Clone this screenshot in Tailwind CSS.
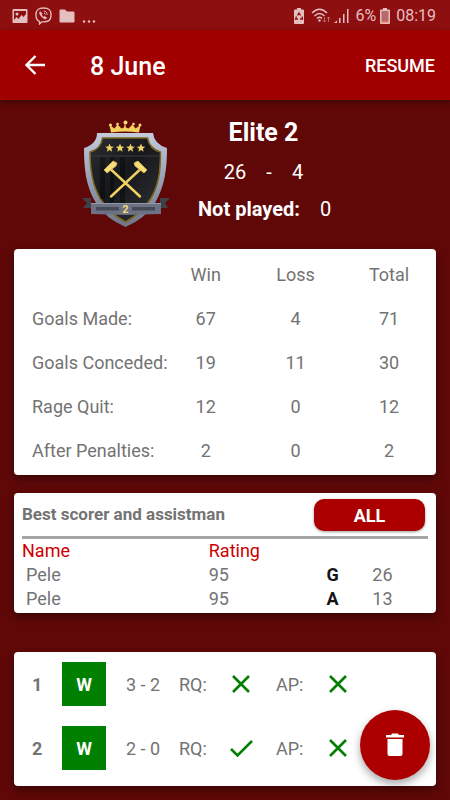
<!DOCTYPE html>
<html lang="en">
<head>
    <meta charset="UTF-8">
    <meta name="viewport" content="width=device-width, initial-scale=1.0">
    <title>8 June</title>
    <script src="https://cdn.jsdelivr.net/npm/@tailwindcss/browser@4"></script>
</head>
<body class="bg-[#600808] min-h-screen font-['Roboto','Liberation_Sans',sans-serif] text-lg leading-6 text-[#737373]">

    <!-- Status bar -->
    <div class="bg-[#8e0f10] h-[30px] pt-[2px] pl-3 pr-[14px] flex items-center justify-between text-[#e3bfc0]">
        <div class="flex items-center gap-[7px]">
            <svg class="w-4 h-4" viewBox="0 0 16 16" fill="currentColor"><path fill-rule="evenodd" d="M1.500 1h13q1 0 1 1v12q0 1-1 1h-13q-1 0-1-1V2q0-1 1-1zM2 3v9l2.500-3 2 2 3-4 2 2 2.500-3V3zM5 4.500a1.500 1.500 0 1 1 0 3 1.500 1.500 0 0 1 0-3z"/></svg>
            <svg class="w-[17px] h-[18px]" viewBox="0 0 17 18" fill="none" stroke="currentColor" stroke-width="1.300"><path d="M8.500 1C3 1 1 3 1 8c0 3.500 1 5.500 3.500 6.400V17l2.300-2.200C13.500 15.200 16 13.500 16 8c0-5-2-7-7.500-7z"/><path d="M5.200 4.500c-1.500 1-.5 3 1 4.800s3.500 3 4.500 2.800l1-1.300-2-1.500-1 .8c-1-.5-1.800-1.400-2.200-2.500l.8-.9z" fill="currentColor" stroke-width=".5"/><path d="M8.800 4c2 .2 3.300 1.500 3.400 3.800M9 6c.8.100 1.300.600 1.400 1.500" stroke-width="1"/></svg>
            <svg class="w-4 h-4" viewBox="0 0 16 16" fill="currentColor"><path d="M1.500 1.500H6L8 3.500h6.500q1 0 1 1v9q0 1-1 1h-13q-1 0-1-1v-11q0-1 1-1z"/></svg>
            <svg class="w-[14px] h-4" viewBox="0 0 14 16" fill="currentColor"><circle cx="2" cy="13.500" r="1.200"/><circle cx="7" cy="13.500" r="1.200"/><circle cx="12" cy="13.500" r="1.200"/></svg>
        </div>
        <div class="flex items-center text-base">
            <svg class="w-[10px] h-4 mr-[7px]" viewBox="0 0 10 16"><path d="M3 0h4v1.500h2q1 0 1 1V15q0 1-1 1H1q-1 0-1-1V2.500q0-1 1-1h2z" fill="currentColor"/><path d="M3.500 7.500L5 5l1.500 2.500M8 8.500L8.500 11H6M4 11H1.500L2.500 8.500" fill="none" stroke="#8e0f10" stroke-width="1.300"/></svg>
            <svg class="w-5 h-4 mr-[3px]" viewBox="0 0 20 16" fill="none" stroke="currentColor" stroke-width="1.500"><path d="M1 5q7.500-7.500 15 0M3.500 8q5-5 10 0M6 10.500q2.500-2.500 5 0"/><circle cx="8.500" cy="12.500" r="1.200" fill="currentColor" stroke="none"/><path d="M13.500 9v5M12 12.500l1.500 1.500 1.500-1.500M17.500 14V9M16 10.500L17.500 9 19 10.500" stroke-width="1" opacity=".5"/></svg>
            <svg class="w-[15px] h-4 mr-[6px]" viewBox="0 0 15 16" fill="currentColor"><path d="M0 15l3-2.500V15zM5 10h1.500v5H5zM9 6h1.500v9H9zM13 1h1.500v14H13z"/></svg>
            <span>6%</span>
            <svg class="w-[10px] h-4 ml-1 mr-[6px]" viewBox="0 0 10 16"><path d="M3 0h4v1.500h2q1 0 1 1V15q0 1-1 1H1q-1 0-1-1V2.500q0-1 1-1h2z" fill="currentColor"/><path d="M1.500 3h7v10h-7z" fill="#b9696a"/><path d="M1.500 13h7v1.500h-7z" fill="#ee6a50"/></svg>
            <span>08:19</span>
        </div>
    </div>

    <!-- App bar -->
    <header class="bg-[#a00000] h-[70px] pl-[23px] pr-[15px] flex items-center text-white shadow-[0_2px_6px_rgba(0,0,0,0.4)]">
        <button aria-label="Back">
            <svg class="w-6 h-6" viewBox="0 0 24 24" fill="none" stroke="currentColor" stroke-width="2.400"><path d="M22 12H4M12.500 3L3.500 12l9 9"/></svg>
        </button>
        <h1 class="ml-[43px] pt-[3px] text-[25px] leading-8 font-medium">8 June</h1>
        <button class="ml-auto pt-[2px] font-medium">RESUME</button>
    </header>

    <!-- Division summary -->
    <section class="px-[14px] pt-[17px] pb-[22px] flex text-white text-xl">
        <svg class="w-[90px] h-[110px] mt-[3px] -mb-[3px] ml-[66px] shrink-0" viewBox="0 0 90 110">
            <defs>
                <linearGradient id="steel" x1="0" y1="0" x2="0" y2="1">
                    <stop offset="0" stop-color="#c3cbdd"/>
                    <stop offset="1" stop-color="#6d7488"/>
                </linearGradient>
                <linearGradient id="dark" x1="0" y1="0" x2="1" y2="1">
                    <stop offset="0" stop-color="#2c2d32"/>
                    <stop offset="0.450" stop-color="#17181b"/>
                    <stop offset="1" stop-color="#303137"/>
                </linearGradient>
            </defs>
            <path d="M31 12.500L29.500 5l5 3.500 3-4 4 4 2.500-1 1-5 1 5 2.500 1 4-4 3 4 5-3.500-1.500 7.500q-14-2-28 0z" fill="#f3cf5e"/>
            <circle cx="45.500" cy="2.500" r="2" fill="#f7dc78"/><circle cx="30.500" cy="5" r="1.500" fill="#f7dc78"/><circle cx="60" cy="5" r="1.500" fill="#f7dc78"/><circle cx="37.500" cy="4" r="1.300" fill="#f7dc78"/><circle cx="53.500" cy="4" r="1.300" fill="#f7dc78"/>
            <path d="M2 78h9v10H3l4-5zM90 78H80v10h8l-3-5z" fill="#3f4048"/>
            <path d="M17 13h56q1 11 14 15c0 20-2 38-12 55q-9 15-29.500 24Q25 98 16 83C6 67 4 49 4 28q13-4 13-15z" fill="url(#steel)"/>
            <path d="M22.500 18h45q2 11 13 14c0 20-2 34-10 47-6 10-14 17-25 23-11-6-19-13-25-23C12.500 66 10 52 10 32q11-3 12.500-14z" fill="url(#dark)" stroke="#7c6820" stroke-width="1.500"/>
            <path d="M20 37h5v42h-5zM30 37h4v45h-4zM40 37h5v50h-5z" fill="#000" opacity=".35"/>
            <path d="M11 36h69" stroke="#3a3b40" stroke-width="1"/>
            <path id="star" d="M29.500 23.500l1.200 3 3 .2-2.300 2 .7 3-2.600-1.600-2.600 1.600.7-3-2.300-2 3-.2z" fill="#efd36a"/>
            <use href="#star" x="10.500"/><use href="#star" x="21"/><use href="#star" x="31.500"/>
            <path d="M31 76.500l29-27M60 76.500l-29-27" stroke="#f0d264" stroke-width="2.400" stroke-linecap="round"/>
            <path d="M24 50l9-9 4 2-1 3-9 7zM67 50l-9-9-4 2 1 3 9 7z" fill="#f6de7c" stroke="#d9b64a" stroke-width=".8"/>
            <path d="M11 83h70v11l-35.500 1L11 94z" fill="#6c7284"/>
            <path d="M11 83h70v1H11z" fill="#9299ab"/>
            <path d="M16 87h23v3.500H16zM52 87h23v3.500H52z" fill="#464a57"/>
            <text x="45.500" y="92.500" text-anchor="middle" font-size="11" font-weight="700" fill="#f6da78">2</text>
        </svg>
        <div class="ml-[26px]">
            <h2 class="text-[25px] leading-8 font-bold text-center w-[135px]">Elite 2</h2>
            <p class="mt-[9px] leading-[28px] flex justify-center gap-5 w-[135px]"><span>26</span><span>-</span><span>4</span></p>
            <p class="mt-[9px] leading-[28px] flex gap-5 pl-[2px]"><strong>Not played:</strong><span>0</span></p>
        </div>
    </section>

    <main>
        <!-- Totals -->
        <section class="mx-[14px] bg-white rounded-[4px] pt-1 pb-[2px] pl-[18px] shadow-[0_4px_10px_rgba(0,0,0,0.4)]">
            <table class="w-full table-fixed text-center">
                <colgroup><col class="w-[32%]"><col class="w-[22%]"><col class="w-[22%]"><col class="w-[24%]"></colgroup>
                <thead>
                    <tr class="h-11"><td></td><th class="font-normal">Win</th><th class="font-normal pl-[2px]">Loss</th><th class="font-normal pl-[3px]">Total</th></tr>
                </thead>
                <tbody>
                    <tr class="h-11"><th class="font-normal text-left whitespace-nowrap">Goals Made:</th><td>67</td><td class="pl-[2px]">4</td><td class="pl-[3px]">71</td></tr>
                    <tr class="h-11"><th class="font-normal text-left whitespace-nowrap">Goals Conceded:</th><td>19</td><td class="pl-[2px]">11</td><td class="pl-[3px]">30</td></tr>
                    <tr class="h-11"><th class="font-normal text-left whitespace-nowrap">Rage Quit:</th><td>12</td><td class="pl-[2px]">0</td><td class="pl-[3px]">12</td></tr>
                    <tr class="h-11"><th class="font-normal text-left whitespace-nowrap">After Penalties:</th><td>2</td><td class="pl-[2px]">0</td><td class="pl-[3px]">2</td></tr>
                </tbody>
            </table>
        </section>

        <!-- Best players -->
        <section class="mx-[14px] mt-[18px] bg-white rounded-[4px] px-2 pt-[6px] pb-[2px] shadow-[0_4px_10px_rgba(0,0,0,0.4)]">
            <div class="flex items-start justify-between pb-[5px] border-b-3 border-[#a5a5a5]">
                <h2 class="text-[17px] font-bold leading-[30px]">Best scorer and assistman</h2>
                <button class="w-[111px] h-8 pt-[2px] mr-[3px] rounded-[10px] bg-[#ac0000] text-white font-bold shadow-[0_1px_3px_rgba(0,0,0,0.4)]">ALL</button>
            </div>
            <table class="w-full table-fixed text-left">
                <colgroup><col class="w-[46%]"><col class="w-[25%]"><col class="w-[11%]"><col class="w-[18%]"></colgroup>
                <thead>
                    <tr class="h-6 text-[#cc0000]"><th class="font-normal">Name</th><th class="font-normal">Rating</th><td></td><td></td></tr>
                </thead>
                <tbody>
                    <tr class="h-6"><td class="pl-1">Pele</td><td>95</td><td class="text-center font-bold text-[#151515]">G</td><td class="text-center pr-[18px]">26</td></tr>
                    <tr class="h-6"><td class="pl-1">Pele</td><td>95</td><td class="text-center font-bold text-[#151515]">A</td><td class="text-center pr-[18px]">13</td></tr>
                </tbody>
            </table>
        </section>

        <!-- Matches -->
        <section class="mx-[14px] mt-[39px] mb-[14px] bg-white rounded-[4px] pl-[18px] pt-[10px] pb-4 flex flex-col gap-5 shadow-[0_4px_10px_rgba(0,0,0,0.4)]">
            <div class="flex items-center leading-[26px]">
                <strong class="w-[30px] pt-[2px]">1</strong>
                <span class="w-11 h-11 pt-[2px] bg-[#008000] text-white font-bold flex items-center justify-center">W</span>
                <span class="w-[73px] pl-5 pt-[2px]">3 - 2</span>
                <span class="w-[47px] pt-[2px]">RQ:</span>
                <svg class="w-[30px] h-6" viewBox="0 0 30 24" fill="none" stroke="#008000" stroke-width="2.600"><path d="M7 4l16 16M23 4L7 20"/></svg>
                <span class="w-[50px] ml-5 pt-[2px]">AP:</span>
                <svg class="w-[30px] h-6 -ml-[3px]" viewBox="0 0 30 24" fill="none" stroke="#008000" stroke-width="2.600"><path d="M7 4l16 16M23 4L7 20"/></svg>
            </div>
            <div class="flex items-center leading-[26px]">
                <strong class="w-[30px] pt-[2px]">2</strong>
                <span class="w-11 h-11 pt-[2px] bg-[#008000] text-white font-bold flex items-center justify-center">W</span>
                <span class="w-[73px] pl-5 pt-[2px]">2 - 0</span>
                <span class="w-[47px] pt-[2px]">RQ:</span>
                <svg class="w-[30px] h-6" viewBox="0 0 30 24" fill="none" stroke="#008000" stroke-width="2.600"><path d="M5 13l6.500 6.500L26 5"/></svg>
                <span class="w-[50px] ml-5 pt-[2px]">AP:</span>
                <svg class="w-[30px] h-6 -ml-[3px]" viewBox="0 0 30 24" fill="none" stroke="#008000" stroke-width="2.600"><path d="M7 4l16 16M23 4L7 20"/></svg>
            </div>
        </section>
    </main>

    <button aria-label="Delete" class="fixed right-5 bottom-5 w-[70px] h-[70px] rounded-full bg-[#ac0000] text-white flex items-center justify-center shadow-[0_4px_8px_rgba(0,0,0,0.35)]">
        <svg class="w-[18px] h-6" viewBox="0 0 18 24" fill="currentColor"><path d="M0 2h5l1-1.500h6L13 2h5v2.500H0zM1.500 6h15v15q0 2-2 2h-11q-2 0-2-2z"/></svg>
    </button>
</body>
</html>
